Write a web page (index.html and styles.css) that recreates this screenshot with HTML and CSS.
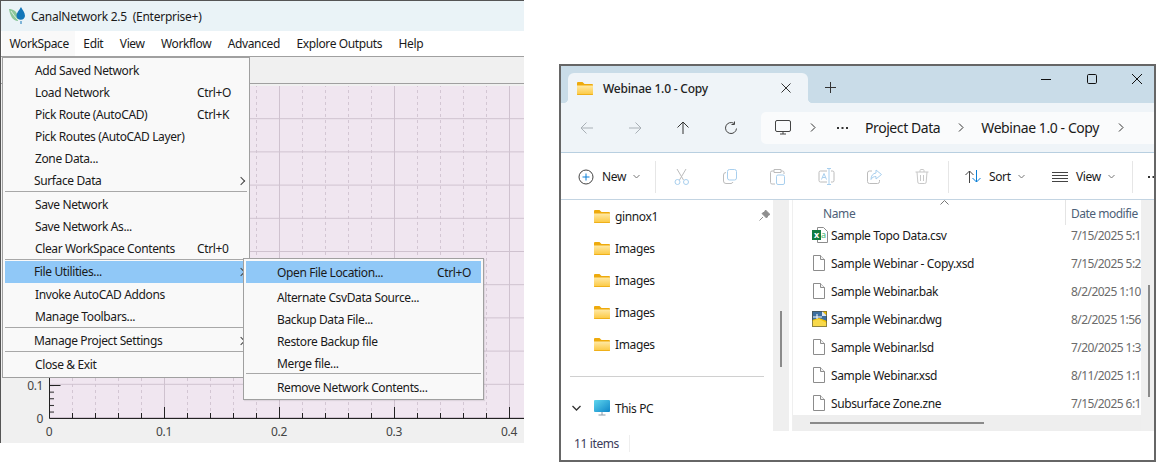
FILE: index.html
```html
<!DOCTYPE html>
<html lang="en">

<head>
  <meta charset="UTF-8">
  <meta name="viewport" content="width=device-width, initial-scale=1.0">
  <title>CanalNetwork and Explorer</title>
  <link rel="stylesheet" href="styles.css">
</head>

<body>
  <svg class="defs" width="0" height="0">
    <defs>
      <linearGradient id="folderFill" x1="0" y1="0" x2="0" y2="1">
        <stop offset="0" stop-color="#ffe9a6" />
        <stop offset="1" stop-color="#fcc83e" />
      </linearGradient>
      <linearGradient id="pcFill" x1="0" y1="0" x2="1" y2="1">
        <stop offset="0" stop-color="#5fd6ee" />
        <stop offset="1" stop-color="#0f86c8" />
      </linearGradient>
      <symbol id="folder" viewBox="0 0 16 14">
        <path d="M0 2a1 1 0 0 1 1-1h4.500l2 2H15a1 1 0 0 1 1 1v2H0z" fill="#eeaa0c" />
        <path d="M0 4.500h16V13a1 1 0 0 1-1 1H1a1 1 0 0 1-1-1z" fill="url(#folderFill)" />
        <path d="M0 13h16v.2a.8.8 0 0 1-.8.8H.8a.8.8 0 0 1-.8-.8z" fill="#efb01a" />
      </symbol>
      <symbol id="sheet" viewBox="0 0 12 16">
        <path d="M.5.500h7l4 4v11H.5z" fill="#fff" stroke="#8c8c8c" />
        <path d="M7.500.500v4h4" fill="#f2f2f2" stroke="#8c8c8c" />
      </symbol>
    </defs>
  </svg>

  <!-- CanalNetwork window -->
  <section class="app">
    <header class="app-title">
      <svg class="logo" width="17" height="17" viewBox="0 0 17 17">
        <path d="M0 2c4 0 8 2 9 8 .3 2 .1 3-.2 4C4 14 1 9 0 2z" fill="#8cc79a" />
        <path d="M2 4c2 3 4 6 7 9" stroke="#fff" stroke-width=".7" fill="none" />
        <path d="M12 0c1.500 3 4 5.500 4 9a4.300 4.300 0 0 1-8.500 0c0-3.500 3-6 4.500-9z" fill="#1276b8" />
        <path d="M12 14v3" stroke="#1276b8" />
      </svg>
      <span>CanalNetwork 2.5&nbsp; (Enterprise+)</span>
    </header>
    <nav class="menubar">
      <span class="menubar-item open">WorkSpace</span>
      <span class="menubar-item">Edit</span>
      <span class="menubar-item">View</span>
      <span class="menubar-item">Workflow</span>
      <span class="menubar-item">Advanced</span>
      <span class="menubar-item">Explore Outputs</span>
      <span class="menubar-item">Help</span>
    </nav>
    <div class="app-toolbar"></div>

    <svg class="plot" viewBox="0 84 524 359" width="524" height="359">
      <defs>
        <pattern id="minorX" x="49" y="0" width="23" height="6" patternUnits="userSpaceOnUse">
          <line x1=".5" y1="0" x2=".5" y2="3" stroke="#d3c6d3" />
        </pattern>
        <pattern id="majorX" x="49" y="0" width="115" height="10" patternUnits="userSpaceOnUse">
          <line x1=".5" y1="0" x2=".5" y2="10" stroke="#cfc2cf" />
        </pattern>
        <pattern id="majorY" x="0" y="85" width="10" height="33.200" patternUnits="userSpaceOnUse">
          <line x1="0" y1=".5" x2="10" y2=".5" stroke="#cfc2cf" />
        </pattern>
        <pattern id="tickX" x="49" y="0" width="23" height="10" patternUnits="userSpaceOnUse">
          <line x1=".5" y1="0" x2=".5" y2="10" stroke="#222" />
        </pattern>
        <pattern id="tickY" x="0" y="385" width="10" height="6.640" patternUnits="userSpaceOnUse">
          <line x1="0" y1=".5" x2="10" y2=".5" stroke="#222" />
        </pattern>
      </defs>
      <rect x="49" y="86" width="475" height="332" fill="#f0e6f0" />
      <rect x="49" y="86" width="475" height="332" fill="url(#minorX)" />
      <rect x="49" y="86" width="475" height="332" fill="url(#majorX)" />
      <rect x="49" y="86" width="475" height="332" fill="url(#majorY)" />
      <rect x="49" y="413" width="475" height="5" fill="url(#tickX)" />
      <rect x="49" y="380" width="5" height="38" fill="url(#tickY)" />
      <path d="M49.500 385.500h11M164.500 418v-11M279.500 418v-11M394.500 418v-11M509.500 418v-11" stroke="#222" />
      <path d="M49.500 378v40.500H524" fill="none" stroke="#222" />
      <g class="plot-label">
        <text x="43" y="390" text-anchor="end">0.1</text>
        <text x="43" y="423" text-anchor="end">0</text>
        <text x="49" y="436" text-anchor="middle">0</text>
        <text x="164" y="436" text-anchor="middle">0.1</text>
        <text x="279" y="436" text-anchor="middle">0.2</text>
        <text x="394" y="436" text-anchor="middle">0.3</text>
        <text x="509" y="436" text-anchor="middle">0.4</text>
      </g>
    </svg>

    <div class="menu workspace-menu">
      <div class="item"><span>Add Saved Network</span></div>
      <div class="item"><span>Load Network</span><kbd>Ctrl+O</kbd></div>
      <div class="item"><span>Pick Route (AutoCAD)</span><kbd>Ctrl+K</kbd></div>
      <div class="item"><span>Pick Routes (AutoCAD Layer)</span></div>
      <div class="item"><span>Zone Data...</span></div>
      <div class="item sub"><span>Surface Data</span><i class="arrow"></i></div>
      <div class="sep"></div>
      <div class="item"><span>Save Network</span></div>
      <div class="item"><span>Save Network As...</span></div>
      <div class="item"><span>Clear WorkSpace Contents</span><kbd>Ctrl+0</kbd></div>
      <div class="sep tight"></div>
      <div class="item sub active"><span>File Utilities...</span><i class="arrow"></i></div>
      <div class="item"><span>Invoke AutoCAD Addons</span></div>
      <div class="item"><span>Manage Toolbars...</span></div>
      <div class="sep"></div>
      <div class="item sub"><span>Manage Project Settings</span><i class="arrow"></i></div>
      <div class="sep"></div>
      <div class="item"><span>Close &amp; Exit</span></div>
    </div>

    <div class="menu file-menu">
      <div class="item active"><span>Open File Location...</span><kbd>Ctrl+O</kbd></div>
      <div class="item"><span>Alternate CsvData Source...</span></div>
      <div class="item"><span>Backup Data File...</span></div>
      <div class="item"><span>Restore Backup file</span></div>
      <div class="item"><span>Merge file...</span></div>
      <div class="sep"></div>
      <div class="item"><span>Remove Network Contents...</span></div>
    </div>
  </section>

  <!-- Explorer window -->
  <section class="explorer">
    <header class="tabs">
      <div class="tab">
        <svg class="tab-folder" width="16" height="14"><use href="#folder" /></svg>
        <span class="tab-name">Webinae 1.0 - Copy</span>
        <svg class="tab-close" width="10" height="10" viewBox="0 0 10 10"><path d="M.5.500l9 9M9.500.500l-9 9" stroke="#333" /></svg>
      </div>
      <svg class="tab-add" width="11" height="11" viewBox="0 0 11 11"><path d="M5.500 0v11M0 5.500h11" stroke="#333" /></svg>
      <div class="win-buttons">
        <svg width="10" height="10" viewBox="0 0 10 10"><path d="M0 5.500h10" stroke="#111" /></svg>
        <svg width="10" height="10" viewBox="0 0 10 10"><rect x=".5" y=".5" width="9" height="9" rx="1.200" fill="none" stroke="#111" /></svg>
        <svg width="10" height="10" viewBox="0 0 10 10"><path d="M0 0l10 10M10 0L0 10" stroke="#111" /></svg>
      </div>
    </header>

    <div class="address-row">
      <div class="nav-buttons">
        <svg width="14" height="14" viewBox="0 0 14 14"><path d="M13 7H1M6.500 1.500L1 7l5.500 5.500" fill="none" stroke="#a9b0b6" /></svg>
        <svg width="14" height="14" viewBox="0 0 14 14"><path d="M1 7h12M7.500 1.500L13 7l-5.500 5.500" fill="none" stroke="#a9b0b6" /></svg>
        <svg width="14" height="14" viewBox="0 0 14 14"><path d="M7 13V1M1.500 6.500L7 1l5.500 5.500" fill="none" stroke="#333" /></svg>
        <svg width="14" height="14" viewBox="0 0 14 14"><path d="M12.500 7.500A5.500 5.500 0 1 1 10 2.400M10.500 .5v3h-3" fill="none" stroke="#444" /></svg>
      </div>
      <div class="address">
        <svg class="pc-outline" width="16" height="15" viewBox="0 0 16 15"><rect x=".5" y=".5" width="15" height="11" rx="1.500" fill="none" stroke="#444" /><path d="M5 14h6M8 12v2" stroke="#444" /></svg>
        <svg class="crumb c1" width="6" height="9" viewBox="0 0 6 9"><path d="M1 .5l4 4-4 4" fill="none" stroke="#333" /></svg>
        <svg class="dots" width="11" height="2" viewBox="0 0 11 2"><path d="M0 0h2v2H0zM4.500 0h2v2h-2zM9 0h2v2H9z" fill="#333" /></svg>
        <span class="crumb-text first">Project Data</span>
        <svg class="crumb c2" width="6" height="9" viewBox="0 0 6 9"><path d="M1 .5l4 4-4 4" fill="none" stroke="#333" /></svg>
        <span class="crumb-text second">Webinae 1.0 - Copy</span>
        <svg class="crumb c3" width="6" height="9" viewBox="0 0 6 9"><path d="M1 .5l4 4-4 4" fill="none" stroke="#333" /></svg>
      </div>
    </div>

    <div class="commands">
      <div class="cmd cmd-new">
        <svg width="16" height="16" viewBox="0 0 16 16"><circle cx="8" cy="8" r="7" fill="none" stroke="#444" /><path d="M8 4.500v7M4.500 8h7" stroke="#0a7fd6" /></svg>
        <span>New</span>
        <svg class="caret" width="7" height="5" viewBox="0 0 7 5"><path d="M.5 1l3 3 3-3" fill="none" stroke="#777" /></svg>
      </div>
      <div class="divider"></div>
      <div class="cmd-icons">
        <svg width="16" height="17" viewBox="0 0 16 17"><path d="M3 1l6.500 11M12 1L5.500 12" stroke="#bcbcbc" fill="none" /><circle cx="3.500" cy="14" r="2.500" fill="none" stroke="#a8cfee" /><circle cx="12" cy="14" r="2.500" fill="none" stroke="#a8cfee" /></svg>
        <svg width="15" height="15" viewBox="0 0 15 15"><rect x="4.500" y=".5" width="9" height="10.500" rx="2" fill="none" stroke="#a8cfee" /><path d="M3 3.500A2.500 2.500 0 0 0 .5 6v6A2.500 2.500 0 0 0 3 14.500h5A2.500 2.500 0 0 0 10 13" fill="none" stroke="#bcbcbc" /></svg>
        <svg width="15" height="16" viewBox="0 0 15 16"><path d="M4 2H2a1.500 1.500 0 0 0-1.500 1.500v10A1.500 1.500 0 0 0 2 15h3M11 2h1.500A1.500 1.500 0 0 1 14 3.500V5M4 .5h7v3H4z" fill="none" stroke="#bcbcbc" /><rect x="6.500" y="6" width="8" height="9.500" rx="1.500" fill="none" stroke="#a8cfee" /></svg>
        <svg width="17" height="17" viewBox="0 0 17 17"><path d="M9 3H2.500A1.500 1.500 0 0 0 1 4.500v8A1.500 1.500 0 0 0 2.500 14H9M13 3h1.500A1.500 1.500 0 0 1 16 4.500v8a1.500 1.500 0 0 1-1.500 1.500H13" fill="none" stroke="#bcbcbc" /><path d="M11 .5v16M9 .5h4M9 16.500h4M3.500 11.500l2.500-6 2.500 6M4.500 9.500h3" fill="none" stroke="#a8cfee" /></svg>
        <svg width="15" height="15" viewBox="0 0 15 15"><path d="M5 2H2.500A2 2 0 0 0 .5 4v8.500a2 2 0 0 0 2 2h8a2 2 0 0 0 2-2V11" fill="none" stroke="#bcbcbc" /><path d="M9 1l5.500 4.500L9 10V7.500C6.500 7.500 5 8.500 4 10.500c0-4 2-6 5-6.500z" fill="none" stroke="#a8cfee" /></svg>
        <svg width="14" height="15" viewBox="0 0 14 15"><path d="M.5 3h13M5 3V1.500A1 1 0 0 1 6 .5h2a1 1 0 0 1 1 1V3M2 3l.8 10a1.500 1.500 0 0 0 1.500 1.500h5.400A1.500 1.500 0 0 0 11.200 13L12 3M5.500 6v6M8.500 6v6" fill="none" stroke="#c8c8c8" /></svg>
      </div>
      <div class="divider"></div>
      <div class="cmd cmd-sort">
        <svg width="16" height="13" viewBox="0 0 16 13"><path d="M4.500 13V1M.5 5l4-4 4 4" fill="none" stroke="#444" /><path d="M11.500 0v12M7.500 8l4 4 4-4" fill="none" stroke="#0a7fd6" /></svg>
        <span>Sort</span>
        <svg class="caret" width="7" height="5" viewBox="0 0 7 5"><path d="M.5 1l3 3 3-3" fill="none" stroke="#777" /></svg>
      </div>
      <div class="cmd cmd-view">
        <svg width="16" height="10" viewBox="0 0 16 10"><path d="M0 .5h16M0 3.500h16M0 6.500h16M0 9.500h16" stroke="#444" /></svg>
        <span>View</span>
        <svg class="caret" width="7" height="5" viewBox="0 0 7 5"><path d="M.5 1l3 3 3-3" fill="none" stroke="#777" /></svg>
      </div>
      <div class="divider"></div>
      <svg class="more" width="11" height="2" viewBox="0 0 11 2"><path d="M0 0h2v2H0zM4.500 0h2v2h-2zM9 0h2v2H9z" fill="#333" /></svg>
    </div>

    <div class="panes">
      <aside class="nav-pane">
        <ul class="nav-list">
          <li class="nav-row"><svg width="16" height="14"><use href="#folder" /></svg><span>ginnox1</span>
            <svg class="pin" width="11" height="11" viewBox="0 0 11 11"><path d="M6.500 0L11 4.500 9.500 5 7.500 8 3 3.500 6 1.500zM4 7l-3.500 3.500" fill="#8f8f8f" stroke="#8f8f8f" /></svg>
          </li>
          <li class="nav-row"><svg width="16" height="14"><use href="#folder" /></svg><span>Images</span></li>
          <li class="nav-row"><svg width="16" height="14"><use href="#folder" /></svg><span>Images</span></li>
          <li class="nav-row"><svg width="16" height="14"><use href="#folder" /></svg><span>Images</span></li>
          <li class="nav-row"><svg width="16" height="14"><use href="#folder" /></svg><span>Images</span></li>
          <li class="nav-sep"></li>
          <li class="nav-row pc-row">
            <svg class="expand" width="9" height="6" viewBox="0 0 9 6"><path d="M.5 1l4 4 4-4" fill="none" stroke="#333" stroke-width="1.300" /></svg>
            <svg width="16" height="16" viewBox="0 0 16 16"><rect width="16" height="12" rx="1" fill="url(#pcFill)" /><path d="M8 12v3M4.500 15h7" stroke="#8a9aa8" /></svg>
            <span>This PC</span>
          </li>
        </ul>
        <div class="nav-scroll"><div class="nav-thumb"></div></div>
      </aside>

      <main class="file-pane">
        <div class="file-main">
          <div class="file-head">
            <span class="head-name">Name</span>
            <svg class="sort-mark" width="9" height="5" viewBox="0 0 9 5"><path d="M.5 4.500l4-4 4 4" fill="none" stroke="#777" /></svg>
            <span class="head-date">Date modifie</span>
          </div>
          <div class="file-rows">
            <div class="file-row">
              <svg width="16" height="16" viewBox="0 0 16 16">
                <path d="M5.500 .5h6l4 4v11h-10z" fill="#fff" stroke="#8c8c8c" />
                <text class="xl-a" x="9.500" y="11">a</text>
                <rect y="3" width="9" height="10" fill="#107c41" />
                <text class="xl-x" x="4.500" y="11">x</text>
              </svg>
              <span>Sample Topo Data.csv</span><span class="date">7/15/2025 5:1</span>
            </div>
            <div class="file-row"><svg class="doc" width="12" height="16"><use href="#sheet" /></svg><span>Sample Webinar - Copy.xsd</span><span class="date">7/15/2025 5:2</span></div>
            <div class="file-row"><svg class="doc" width="12" height="16"><use href="#sheet" /></svg><span>Sample Webinar.bak</span><span class="date">8/2/2025 1:10</span></div>
            <div class="file-row">
              <svg width="15" height="16" viewBox="0 0 15 16">
                <rect width="15" height="16" fill="#f5c400" />
                <path d="M0 0h10l5 5v5L7 7 0 9z" fill="#3d6f9f" />
                <path d="M10 0l5 5h-5z" fill="#dfe8f0" />
                <path d="M1 6h9M5 3v5" stroke="#fff" />
                <path d="M0 10l7-2 8 4v4H0z" fill="#f8d94a" />
                <rect x=".5" y=".5" width="14" height="15" fill="none" stroke="#4a4a3a" stroke-opacity=".6" />
              </svg>
              <span>Sample Webinar.dwg</span><span class="date">8/2/2025 1:56</span>
            </div>
            <div class="file-row"><svg class="doc" width="12" height="16"><use href="#sheet" /></svg><span>Sample Webinar.lsd</span><span class="date">7/20/2025 1:3</span></div>
            <div class="file-row"><svg class="doc" width="12" height="16"><use href="#sheet" /></svg><span>Sample Webinar.xsd</span><span class="date">8/11/2025 1:1</span></div>
            <div class="file-row"><svg class="doc" width="12" height="16"><use href="#sheet" /></svg><span>Subsurface Zone.zne</span><span class="date">7/15/2025 6:1</span></div>
          </div>
          <div class="h-scroll"><div class="h-thumb"></div></div>
        </div>
        <div class="v-scroll"><div class="v-thumb"></div></div>
      </main>
    </div>

    <footer class="status"><span>11 items</span></footer>
  </section>
</body>

</html>
```

FILE: styles.css
```css
* {
  margin: 0;
  padding: 0;
  box-sizing: border-box;
}

html,
body {
  width: 1158px;
  height: 467px;
  overflow: hidden;
  background: #fff;
}

body {
  position: relative;
  font: 12px "Noto Sans", "Open Sans", sans-serif;
  letter-spacing: -0.38px;
  color: #1a1a1a;
}

svg {
  display: block;
  flex: none;
}

.defs {
  position: absolute;
}

/* windows sit on a free desktop */
.app {
  position: absolute;
  left: 0;
  top: 0;
  width: 524px;
  height: 443px;
  display: flex;
  flex-direction: column;
  background: #f0f0f0;
  border-top: 1px solid #555;
  border-left: 1px solid #555;
}

.app-title {
  height: 30px;
  display: flex;
  align-items: center;
  gap: 5px;
  padding-left: 8px;
  background: #eaf3f7;
  letter-spacing: -0.25px;
}

.logo {
  margin-top: -1px;
}

.menubar {
  height: 26px;
  display: flex;
  align-items: stretch;
  padding-left: 1px;
  background: #fff;
  border-bottom: 1px solid #a0a0a0;
}

.menubar-item {
  display: flex;
  align-items: center;
  padding: 0 8.500px 0 8px;
}

.menubar-item.open {
  background: #f9f9f9;
  padding: 0 6.500px 0 7.500px;
}

.app-toolbar {
  height: 27px;
  background: #f0f0f0;
  border-bottom: 1px solid #a0a0a0;
}

.plot {
  margin-left: -1px;
}

.plot-label text {
  font: 12px "Noto Sans", sans-serif;
  fill: #444;
}

.menu {
  position: absolute;
  background: #f9f9f9;
  border: 1px solid #a0a0a0;
  padding: 2px;
}

.workspace-menu {
  left: 1px;
  top: 56px;
  width: 248px;
  height: 321px;
}

.file-menu {
  left: 242px;
  top: 257px;
  width: 241px;
  height: 142px;
  box-shadow: 1px 1px 1px rgba(0, 0, 0, 0.08);
}

.item {
  height: 22px;
  display: flex;
  align-items: center;
  justify-content: space-between;
  padding: 0 8px 0 31px;
}

.workspace-menu .item {
  padding: 0 14px 1px 30px;
}

.workspace-menu .item.sub {
  padding-left: 29px;
  padding-right: 3px;
}

.item.active {
  margin-bottom: 1px;
  background: #90c8f7;
}

.file-menu .item.active {
  margin-bottom: 3px;
}

.item kbd {
  width: 36px;
  font: inherit;
  white-space: nowrap;
}

.arrow {
  width: 6px;
  height: 6px;
  border-top: 1px solid #444;
  border-right: 1px solid #444;
  transform: rotate(45deg);
}

.sep {
  height: 2px;
  margin-top: -1px;
  margin-bottom: 1px;
  border-top: 1px solid #a8a8a8;
}

.sep.tight {
  margin-bottom: 0;
}

/* explorer */
.explorer {
  position: absolute;
  left: 559px;
  top: 64px;
  width: 597px;
  height: 398px;
  display: flex;
  flex-direction: column;
  overflow: hidden;
  background: #fff;
  border: 2px solid #666;
}

.tabs {
  height: 37px;
  display: flex;
  align-items: flex-end;
  flex: none;
  padding-left: 7px;
  background: #c9dce8;
}

.tab {
  position: relative;
  width: 240px;
  height: 30px;
  display: flex;
  align-items: center;
  padding-left: 9px;
  background: #eff4f8;
  border-radius: 6px 6px 0 0;
}

.tab::before,
.tab::after {
  content: "";
  position: absolute;
  bottom: 0;
  width: 5px;
  height: 5px;
}

.tab::before {
  left: -5px;
  background: radial-gradient(circle at 0 0, transparent 5px, #eff4f8 5.500px);
}

.tab::after {
  right: -5px;
  background: radial-gradient(circle at 100% 0, transparent 5px, #eff4f8 5.500px);
}

.tab-name {
  margin-left: 10px;
  font-weight: 500;
  letter-spacing: -0.2px;
  color: #222;
}

.tab-close {
  margin-left: auto;
  margin-right: 17px;
}

.tab-add {
  margin: 0 0 10px 17px;
}

.win-buttons {
  display: flex;
  gap: 35.500px;
  margin: 0 12px 19px auto;
}

.address-row {
  height: 50px;
  flex: none;
  display: flex;
  align-items: center;
  background: #eff4f8;
  border-bottom: 1px solid #b8cfe0;
}

.nav-buttons {
  width: 200px;
  display: flex;
  gap: 34px;
  padding-left: 19px;
}

.address {
  flex: 1;
  height: 32px;
  display: flex;
  align-items: center;
  background: #fafbfc;
  border-radius: 5px 0 0 5px;
  font-size: 14px;
  letter-spacing: -0.42px;
}

.pc-outline {
  margin-left: 14px;
}

.c1 {
  margin-left: 19px;
}

.dots {
  margin-left: 21px;
}

.first {
  margin-left: 17px;
}

.c2 {
  margin-left: 18px;
}

.second {
  margin-left: 17px;
}

.c3 {
  margin-left: 19px;
}

.commands {
  height: 47px;
  flex: none;
  display: flex;
  align-items: center;
  padding: 1px 0 0 17px;
  border-bottom: 1px solid #c3d4e2;
}

.commands > * {
  flex: none;
}

.cmd {
  display: flex;
  align-items: center;
}

.cmd-new span {
  margin-left: 8px;
}

.caret {
  margin-left: 7px;
}

.divider {
  width: 1px;
  height: 32px;
  background: #e6e6e6;
}

.cmd-new {
  width: 77px;
}

.cmd-icons {
  width: 292px;
  display: flex;
  align-items: center;
  justify-content: space-between;
  padding: 0 19px 0 18px;
}

.cmd-sort {
  margin-left: 16px;
  width: 87px;
}

.cmd-sort span {
  margin-left: 8px;
}

.cmd-view {
  width: 80px;
}

.cmd-view span {
  margin-left: 8px;
}

.more {
  margin-left: 15px;
}

.panes {
  height: 231px;
  flex: none;
  display: flex;
}

.nav-pane {
  width: 228px;
  display: flex;
  flex: none;
}

.nav-list {
  width: 212px;
  list-style: none;
}

.nav-row {
  position: relative;
  height: 32px;
  display: flex;
  align-items: center;
  gap: 5px;
  padding-left: 33px;
}

.nav-sep {
  height: 1px;
  margin: 16px 9px 15px 9px;
  background: #d0d0d0;
}

.pc-row {
  padding-left: 11px;
}

.expand {
  margin-right: 8px;
}

.pin {
  position: absolute;
  right: 3px;
  top: 10px;
}

.nav-scroll {
  width: 16px;
  position: relative;
  background: #efefef;
}

.nav-thumb {
  position: absolute;
  left: 7px;
  top: 111px;
  width: 2px;
  height: 56px;
  background: #8a8a8a;
}

.file-pane {
  flex: 1;
  min-width: 0;
  display: flex;
  margin-left: 3px;
  border-left: 1px solid #efefef;
}

.file-main {
  flex: 1;
  min-width: 0;
  display: flex;
  flex-direction: column;
  overflow: hidden;
}

.file-head {
  position: relative;
  height: 21px;
  flex: none;
  color: #4d5f78;
}

.head-name {
  position: absolute;
  left: 30px;
  top: 5px;
}

.head-date {
  position: absolute;
  left: 278px;
  top: 5px;
  letter-spacing: -0.5px;
  white-space: nowrap;
}

.file-head::after {
  content: "";
  position: absolute;
  left: 272px;
  top: 0;
  width: 1px;
  height: 25px;
  background: #e4e4e4;
}

.sort-mark {
  position: absolute;
  left: 147px;
  top: 0;
}

.file-rows {
  flex: 1;
  min-height: 0;
  overflow: hidden;
}

.file-row {
  height: 28px;
  display: grid;
  grid-template-columns: 16px 237px max-content;
  column-gap: 3px;
  align-items: center;
  padding-left: 19px;
}

.file-row .doc {
  margin-left: 1px;
}

.date {
  color: #6b6b6b;
  letter-spacing: -0.55px;
  white-space: nowrap;
}

.xl-a,
.xl-x {
  font: 700 9px "Noto Sans", sans-serif;
  text-anchor: middle;
  letter-spacing: 0;
}

.xl-a {
  fill: #3cb371;
  font-weight: 400;
  transform: translateX(2px);
}

.xl-x {
  fill: #fff;
}

.h-scroll {
  height: 16px;
  flex: none;
  position: relative;
  background: #eee;
}

.h-thumb {
  position: absolute;
  left: 17px;
  top: 7px;
  width: 174px;
  height: 2px;
  background: #8a8a8a;
}

.v-scroll {
  width: 13px;
  flex: none;
  position: relative;
  background: #efefef;
}

.v-thumb {
  position: absolute;
  left: 7px;
  top: 85px;
  width: 2px;
  height: 112px;
  background: #8a8a8a;
}

.status {
  flex: 1;
  display: flex;
  align-items: center;
  padding: 0 0 4px 13px;
  color: #3b3b5a;
}

.status span {
  padding-right: 10px;
  border-right: 1px solid #eee;
}
```
